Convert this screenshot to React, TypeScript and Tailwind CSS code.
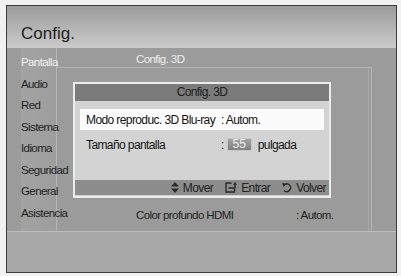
// Config. 3D — Samsung-style TV settings menu with popup dialog

const font = { fontFamily: '"Liberation Sans", Arial, sans-serif' }

const menu = ['Pantalla', 'Audio', 'Red', 'Sistema', 'Idioma', 'Seguridad', 'General', 'Asistencia']

function MoveIcon() {
  return (
    <svg width="8" height="11" viewBox="0 0 8 11" className="inline-block">
      <path d="M4 0 L8 4.5 H0 Z M0 6.5 H8 L4 11 Z" fill="#2a2a2a" />
    </svg>
  )
}

function EnterIcon() {
  return (
    <svg width="12" height="11" viewBox="0 0 12 11" className="inline-block">
      <path d="M6.5 1 H1 V10 H9.5 V7" fill="none" stroke="#2a2a2a" strokeWidth="1.4" />
      <path d="M3.5 6 H10 V2" fill="none" stroke="#2a2a2a" strokeWidth="1.4" />
      <path d="M8 2.8 L10 0 L12 2.8 Z" fill="#2a2a2a" />
    </svg>
  )
}

function ReturnIcon() {
  return (
    <svg width="10" height="11" viewBox="0 0 10 11" className="inline-block">
      <path d="M2.6 2.4 A3.9 3.9 0 1 1 2 8.6" fill="none" stroke="#2a2a2a" strokeWidth="1.4" />
      <path d="M0.2 0.8 L4.3 2 L1.4 4.9 Z" fill="#2a2a2a" />
    </svg>
  )
}

export default function App() {
  return (
    <div className="w-[401px] h-[276px] bg-[#f1f1f1] pt-[5px] pl-[6px]" style={font}>
      <div className="relative w-[391px] h-[268px] border border-[#3c3c3c] flex flex-col overflow-hidden">

        {/* Header */}
        <div className="h-[42px] bg-gradient-to-b from-[#9c9c9c] to-[#cbcbcb] flex items-end pl-[14px] pb-[6px]">
          <span className="text-[17px] text-[#1e1e1e] leading-none">Config.</span>
        </div>

        {/* Body */}
        <div className="h-[183px] bg-[#9b9b9b] flex pl-[14px] pr-[24px] text-[11.5px] tracking-[-0.6px]">
          <div className="w-[36px] pt-[4px] border-r border-[#b5b5b5] bg-gradient-to-r from-[#a3a3a3] to-[#9d9d9d]">
            {menu.map((m, i) => (
              <div
                key={m}
                className={`h-[21.5px] leading-[21.5px] whitespace-nowrap ${i === 0 ? 'text-[#f2f2f2]' : 'text-[#1e1e1e]'}`}
              >
                {m}
              </div>
            ))}
          </div>
          <div className="flex-1 flex flex-col">
            <div className="h-[19px] pt-[4px] pl-[79px] leading-[15px] text-[#eeeeee]">Config. 3D</div>
            <div className="flex-1 border-t border-r border-[#b4b4b4] pr-[2px]">
              <div className="h-full border-r border-[#a9a9a9] flex flex-col justify-end pb-[8px]">
                <div className="flex text-[#1e1e1e] leading-[15px] pl-[79px]">
                  <span className="w-[160px]">Color profundo HDMI</span>
                  <span>: Autom.</span>
                </div>
              </div>
            </div>
          </div>
        </div>

        {/* Lower strip */}
        <div className="flex-1 bg-[#a8a8a8] border-t border-[#bdbdbd]" />

        {/* Dialog */}
        <div className="absolute left-[66px] top-[76px] w-[258px] h-[116px] border-2 border-[#ececec] bg-[#d3d3d3] flex flex-col text-[12px] tracking-[-0.6px]">
          <div className="h-[17px] bg-[#7b7b7b] text-center leading-[17px] text-[#202020]">Config. 3D</div>
          <div className="flex-1 px-[5px] pt-[8px]">
            <div className="h-[21px] bg-[#fbfbfb] flex items-center pl-[6px] text-[#151515] whitespace-nowrap">
              <span className="w-[135px]">Modo reproduc. 3D Blu-ray</span>
              <span>: Autom.</span>
            </div>
            <div className="h-[21px] mt-[4px] flex items-center pl-[6px] text-[#151515] whitespace-nowrap">
              <span className="w-[135px]">Tamaño pantalla</span>
              <span>:</span>
              <span className="ml-[3px] w-[25px] h-[13px] bg-gradient-to-b from-[#a4a4a4] to-[#808080] border border-[#c6c6c6] text-[#f0f0f0] text-[12px] leading-[11px] text-center tracking-normal">55</span>
              <span className="ml-[6px]">pulgada</span>
            </div>
          </div>
          <div className="h-[15px] mb-[1px] bg-[#8d8d8d] flex items-center justify-end pr-[3px] gap-[12px] text-[#222]">
            <span className="flex items-center gap-[4px]"><MoveIcon />Mover</span>
            <span className="flex items-center gap-[4px]"><EnterIcon />Entrar</span>
            <span className="flex items-center gap-[4px]"><ReturnIcon />Volver</span>
          </div>
        </div>
      </div>
    </div>
  )
}
